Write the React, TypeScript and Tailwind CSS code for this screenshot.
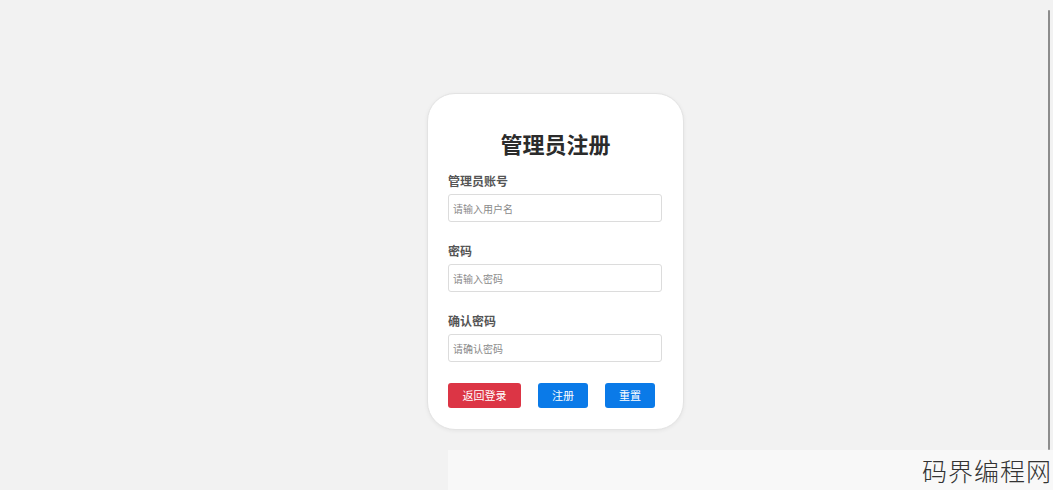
export default function App() {
  const font = { fontFamily: '"Noto Sans CJK SC", "Noto Sans", sans-serif' };
  const fields = [
    { label: "管理员账号", placeholder: "请输入用户名" },
    { label: "密码", placeholder: "请输入密码" },
    { label: "确认密码", placeholder: "请确认密码" },
  ];

  return (
    <div className="relative h-[490px] w-[1053px] overflow-hidden bg-[#f2f2f2]" style={font}>
      <div className="pl-[427px] pt-[93px]">
        <div className="flex h-[337px] w-[257px] flex-col rounded-[28px] border border-[#e3e3e3] bg-white px-[20px] pt-[32px] shadow-[0_1px_4px_rgba(0,0,0,0.06)]">
          <h1 className="text-center text-[22px] font-bold leading-[34px] text-[#2b2b2b]">管理员注册</h1>
          <div className="mt-[12px] flex flex-col gap-[20px]">
            {fields.map((f) => (
              <div key={f.label} className="flex flex-col">
                <label className="text-[12px] font-bold leading-[18px] text-[#555]">{f.label}</label>
                <input
                  type="text"
                  placeholder={f.placeholder}
                  className="mt-[4px] h-[28px] w-[214px] rounded-[3px] border border-[#dcdcdc] px-[4px] text-[10px] outline-none placeholder:text-[#8a8a8a]"
                />
              </div>
            ))}
          </div>
          <div className="mt-[21px] flex gap-[17px]">
            <button className="h-[25px] w-[73px] rounded-[3px] bg-[#dc3545] text-[11px] text-white">返回登录</button>
            <button className="h-[25px] w-[50px] rounded-[3px] bg-[#0a7ae8] text-[11px] text-white">注册</button>
            <button className="h-[25px] w-[50px] rounded-[3px] bg-[#0a7ae8] text-[11px] text-white">重置</button>
          </div>
        </div>
      </div>
      <div className="absolute right-[3px] top-[10px] h-[440px] w-[2px] rounded-full bg-[#8c8c8c]" />
      <div className="absolute bottom-0 left-[448px] right-0 flex h-[40px] items-center justify-end bg-[#f8f8f8] pr-[1px]">
        <span className="text-[25px] font-light leading-none tracking-[1px] text-[#333]">码界编程网</span>
      </div>
    </div>
  );
}
